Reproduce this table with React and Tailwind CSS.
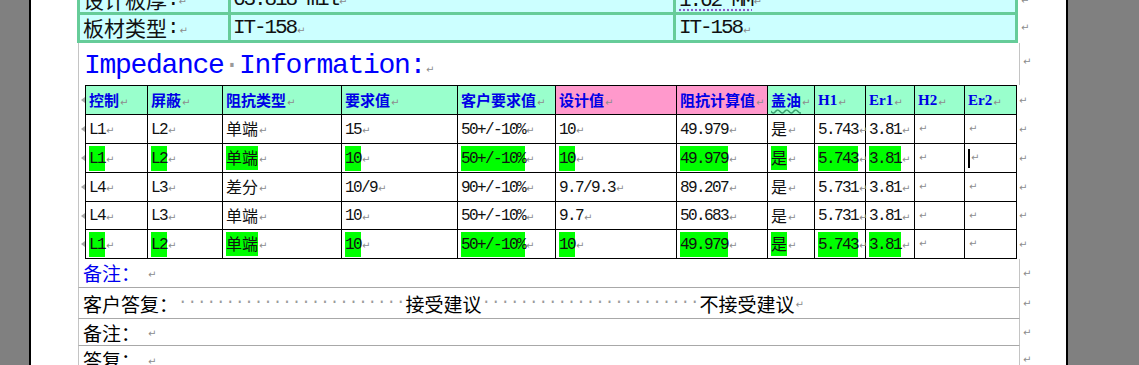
const CJK_SPLIT = /([\u2e80-\u9fff\u3000-\u303f\uff00-\uffef]+)/
const CJK_ONE = /^[\u2e80-\u9fff\u3000-\u303f\uff00-\uffef]/

const MONO = "font-['Liberation_Mono',monospace] tracking-[-0.1em]"
const HAN = "font-['Noto_Sans_CJK_SC',sans-serif]"
const HEAD_LATIN = "font-['Liberation_Serif',serif] text-[15px]"

// splits a string into CJK / latin runs so latin gets the half-width mono look
function Mixed({ text, latin = MONO }) {
  return text.split(CJK_SPLIT).filter(Boolean).map((part, i) => (
    <span key={i} className={CJK_ONE.test(part) ? HAN : latin}>{part}</span>
  ))
}

function Mark({ className = '' }) {
  return (
    <span className={"font-['DejaVu_Sans',sans-serif] text-[10px] leading-none text-[#8c8c8c] " + className}>↵</span>
  )
}

function Dots({ n }) {
  return (
    <span className="font-['Liberation_Mono',monospace] text-[15.8px] text-[#9a9a9a]">
      {'·'.repeat(n)}
    </span>
  )
}

const COLS = 'grid grid-cols-[62px_75px_119px_116px_98px_121px_91px_47px_51px_49px_50px_52px]'
const ROW_H = ['h-[29px]', 'h-[29px]', 'h-[29px]', 'h-[29px]', 'h-[28px]', 'h-[29px]']

const HEADERS = ['控制', '屏蔽', '阻抗类型', '要求值', '客户要求值', '设计值', '阻抗计算值', '盖油', 'H1', 'Er1', 'H2', 'Er2']

const ROWS = [
  { hl: false, cells: ['L1', 'L2', '单端', '15', '50+/-10%', '10', '49.979', '是', '5.743', '3.81', '', ''] },
  { hl: true, cursor: true, cells: ['L1', 'L2', '单端', '10', '50+/-10%', '10', '49.979', '是', '5.743', '3.81', '', ''] },
  { hl: false, cells: ['L4', 'L3', '差分', '10/9', '90+/-10%', '9.7/9.3', '89.207', '是', '5.731', '3.81', '', ''] },
  { hl: false, cells: ['L4', 'L3', '单端', '10', '50+/-10%', '9.7', '50.683', '是', '5.731', '3.81', '', ''] },
  { hl: true, cells: ['L1', 'L2', '单端', '10', '50+/-10%', '10', '49.979', '是', '5.743', '3.81', '', ''] },
]

function Tick() {
  return (
    <span className="absolute left-[-5px] top-1/2 -translate-y-1/2 w-0 h-0 border-y-[3px] border-y-transparent border-r-[4px] border-r-[#a8a8a8]" />
  )
}

function TopTable() {
  const cell = 'flex items-center border-[#66cc99]'
  return (
    <div className="flex mt-[-17px]">
      <div className="w-[941px] border-[3px] border-[#66cc99] bg-[#ccffff] text-[21px] text-[#111] leading-none">
        <div className="grid grid-cols-[151px_445px_339px]">
          <div className={cell + ' h-[29px] border-b-[3px] border-r-[3px] pl-[3px]'}>
            <Mixed text="设计板厚:" /><Mark className="ml-[1px] mt-[6px]" />
          </div>
          <div className={cell + ' h-[29px] border-b-[3px] border-r-[3px] pl-[2px]'}>
            <Mixed text="63.818 mil" /><Mark className="ml-[1px] mt-[6px]" />
          </div>
          <div className={cell + ' h-[29px] border-b-[3px] pl-[3px]'}>
            <span className="underline decoration-dotted decoration-[#8a5cc8] underline-offset-[4px]"><Mixed text="1.62 MM" /></span>
            <Mark className="ml-[1px] mt-[6px]" />
          </div>
          <div className={cell + ' h-[25px] border-r-[3px] pl-[3px]'}>
            <Mixed text="板材类型:" /><Mark className="ml-[2px] mt-[6px]" />
          </div>
          <div className={cell + ' h-[25px] border-r-[3px] pl-[2px]'}>
            <Mixed text="IT-158" /><Mark className="ml-[1px] mt-[6px]" />
          </div>
          <div className={cell + ' h-[25px] pl-[3px]'}>
            <Mixed text="IT-158" /><Mark className="ml-[1px] mt-[6px]" />
          </div>
        </div>
      </div>
      <div className="flex flex-col pt-[3px] pl-[3px]">
        <div className="h-[29px] flex items-center"><Mark /></div>
        <div className="h-[25px] flex items-center"><Mark /></div>
      </div>
    </div>
  )
}

function ImpedanceTable() {
  return (
    <div className="flex">
      <div className="ml-[1px] w-[7px] border-l border-[#c4c4c4]" />
      <div className={COLS + ' border-l border-t border-black text-[#111]'}>
        {HEADERS.map((h, i) => (
          <div
            key={h}
            className={
              'relative flex items-center whitespace-nowrap pl-[3px] border-r border-b border-black font-bold text-[15px] text-[#0000e6] ' +
              ROW_H[0] + ' ' + (i === 5 || i === 6 ? 'bg-[#ff99cc]' : 'bg-[#99ffcc]')
            }
          >
            {i === 0 && <Tick />}
            <span className={i === 7 ? 'underline decoration-wavy decoration-[#3aa070] underline-offset-[3px]' : ''}>
              <Mixed text={h} latin={HEAD_LATIN} />
            </span>
            <Mark className="ml-[1px] mt-[5px] font-normal" />
          </div>
        ))}
        {ROWS.map((row, r) =>
          row.cells.map((c, i) => (
            <div
              key={r + '-' + i}
              className={'relative flex items-center whitespace-nowrap pl-[3px] border-r border-b border-black text-[16px] ' + ROW_H[r + 1]}
            >
              {i === 0 && <Tick />}
              {c && (
                <span className={'leading-[23px] ' + (row.hl ? 'bg-[#00ff00]' : '')}>
                  <Mixed text={c} />
                </span>
              )}
              {row.cursor && i === 11 && <span className="w-[2px] h-[19px] bg-black" />}
              <Mark className={c ? 'ml-[1px] mt-[4px]' : 'ml-[1px]'} />
            </div>
          ))
        )}
      </div>
      <div className="flex flex-col pt-[1px] pl-[2px]">
        {ROW_H.map((h, i) => (
          <div key={i} className={h + ' flex items-center'}><Mark /></div>
        ))}
      </div>
    </div>
  )
}

function NoteRow({ h, children }) {
  return (
    <div className="flex items-center">
      <div className={'ml-[1px] w-[942px] flex items-center pl-[4px] border-x border-b border-x-[#c4c4c4] border-b-[#a8a8a8] text-[19px] leading-none ' + h}>
        {children}
      </div>
      <Mark className="ml-[3px]" />
    </div>
  )
}

export default function App() {
  return (
    <div className="flex h-[365px] w-[1139px] overflow-hidden bg-[#808080]">
      <div className="w-[29px] shrink-0" />
      <div className="w-[1039px] shrink-0 border-x-2 border-black bg-white">
        <div className="pl-[46px]">
          <TopTable />

          <div className="flex items-center">
            <div className="ml-[1px] w-[942px] h-[42px] flex items-center pl-[5px] border-x border-[#c4c4c4] text-[#0000ff]">
              <span className="font-['Liberation_Mono',monospace] text-[28px] tracking-[-1.3px] leading-none mt-[3px]">
                Impedance<span className="text-[#9a9a9a]">·</span>Information:
              </span>
              <Mark className="ml-[1px] mt-[12px]" />
            </div>
            <Mark className="ml-[3px] mt-[-4px]" />
          </div>

          <ImpedanceTable />

          <NoteRow h="h-[29px]">
            <span className="text-[#0000ee]"><Mixed text="备注：" /></span>
            <Mark className="ml-[8px] mt-[4px]" />
          </NoteRow>
          <NoteRow h="h-[31px]">
            <Mixed text="客户答复：" />
            <Dots n={24} />
            <Mixed text="接受建议" />
            <Dots n={23} />
            <Mixed text="不接受建议" />
            <Mark className="ml-[1px] mt-[4px]" />
          </NoteRow>
          <NoteRow h="h-[27px]">
            <Mixed text="备注：" />
            <Mark className="ml-[8px] mt-[4px]" />
          </NoteRow>
          <NoteRow h="h-[28px]">
            <Mixed text="答复：" />
            <Mark className="ml-[8px] mt-[4px]" />
          </NoteRow>
        </div>
      </div>
      <div className="flex-1" />
    </div>
  )
}
